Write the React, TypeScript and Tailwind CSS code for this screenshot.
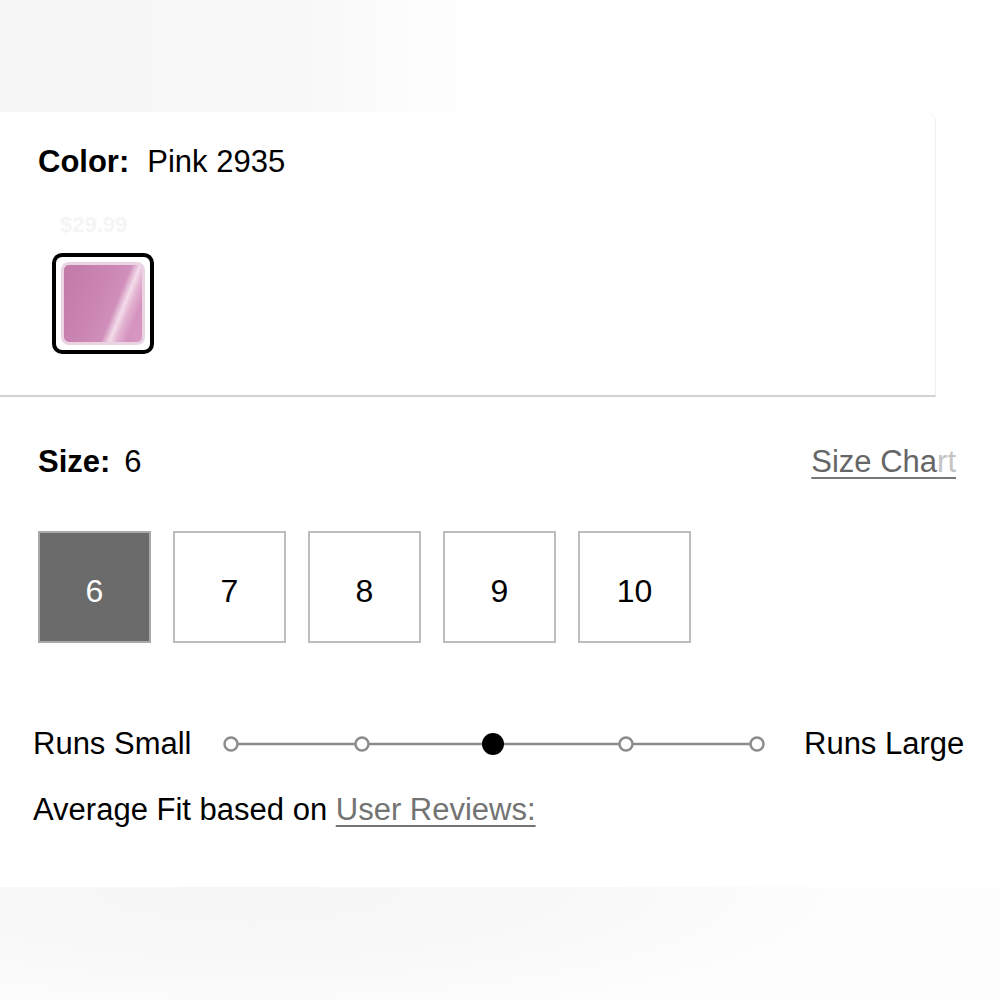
import React from 'react'

const sizes = ['6', '7', '8', '9', '10']

const FitScale: React.FC<{ active: number }> = ({ active }) => {
  const xs = [11, 142, 273, 406, 537]
  return (
    <svg width="550" height="30" viewBox="0 0 550 30" className="shrink-0">
      <line x1="11" y1="15" x2="537" y2="15" stroke="#8c8c8c" strokeWidth="2.5" />
      {xs.map((x, i) =>
        i === active ? (
          <circle key={x} cx={x} cy="15" r="11" fill="#000" />
        ) : (
          <circle key={x} cx={x} cy="15" r="6.5" fill="#fff" stroke="#8c8c8c" strokeWidth="2.5" />
        )
      )}
    </svg>
  )
}

const App: React.FC = () => {
  const selected = '6'

  return (
    <div
      className="w-[1000px] h-[1000px] bg-white overflow-hidden flex flex-col text-black"
      style={{ fontFamily: '"Liberation Sans", Arial, sans-serif' }}
    >
      {/* faint header strip */}
      <div className="h-[112px] shrink-0 bg-[linear-gradient(90deg,#f7f6f6_0%,#f9f8f8_30%,#fdfdfd_42%,#ffffff_50%)]" />

      {/* color panel */}
      <div className="h-[285px] shrink-0 w-[936px] border-r border-b-2 border-r-[#eeeeee] border-b-[#d3d3d3] rounded-tr-[10px] pl-[38px] pt-[32px]">
        <div className="text-[31px] leading-[36px] flex">
          <span className="font-bold">Color:</span>
          <span className="ml-[18px]">Pink 2935</span>
        </div>
        <div className="ml-[22px] mt-[32px] text-[22px] leading-[26px] font-bold text-[#f5f5f5]">$29.99</div>
        <div className="ml-[14px] mt-[15px] w-[102px] h-[101px] border-[4px] border-black rounded-[10px] p-[5px]">
          <div className="w-full h-full rounded-[8px] border-[3px] border-[#ead3e2] bg-[linear-gradient(112deg,#c27aa8_0%,#cb86b3_45%,#d08fbb_62%,#f3dcea_70%,#e3b3d1_76%,#d593bf_85%,#d899c3_100%)]" />
        </div>
      </div>

      {/* size section */}
      <div className="pl-[38px] pr-[44px] pt-[47px]">
        <div className="flex items-center justify-between text-[31px] leading-[36px]">
          <div>
            <span className="font-bold">Size:</span>
            <span className="ml-[14px]">6</span>
          </div>
          <a className="text-[#666666] underline underline-offset-[5px] decoration-2 decoration-[#777777]">
            Size Cha<span className="text-[#c4c4c4]">rt</span>
          </a>
        </div>

        <div className="flex gap-[22px] mt-[51px]">
          {sizes.map((s) => (
            <button
              key={s}
              className={
                s === selected
                  ? 'w-[113px] h-[112px] pt-[7px] border-2 border-[#a9a9a9] bg-[#6b6b6b] text-white text-[32px] flex items-center justify-center'
                  : 'w-[113px] h-[112px] pt-[7px] border-2 border-[#bdbdbd] bg-white text-black text-[32px] flex items-center justify-center'
              }
            >
              {s}
            </button>
          ))}
        </div>
      </div>

      {/* fit scale */}
      <div className="pl-[33px] mt-[83px] flex items-center text-[31px] leading-[36px]">
        <span className="w-[187px] shrink-0">Runs Small</span>
        <FitScale active={2} />
        <span className="ml-[34px]">Runs Large</span>
      </div>
      <div className="pl-[33px] mt-[30px] text-[31px] leading-[36px]">
        Average Fit based on{' '}
        <a className="text-[#737373] underline underline-offset-[5px] decoration-2">User Reviews:</a>
      </div>

      <div className="flex-1" />
      {/* faint footer strip */}
      <div className="h-[113px] shrink-0 bg-[radial-gradient(ellipse_60%_120%_at_25%_0%,#f6f6f6_0%,#f8f8f8_50%,#fbfbfb_80%,#fdfdfd_100%)]" />
    </div>
  )
}

export default App
